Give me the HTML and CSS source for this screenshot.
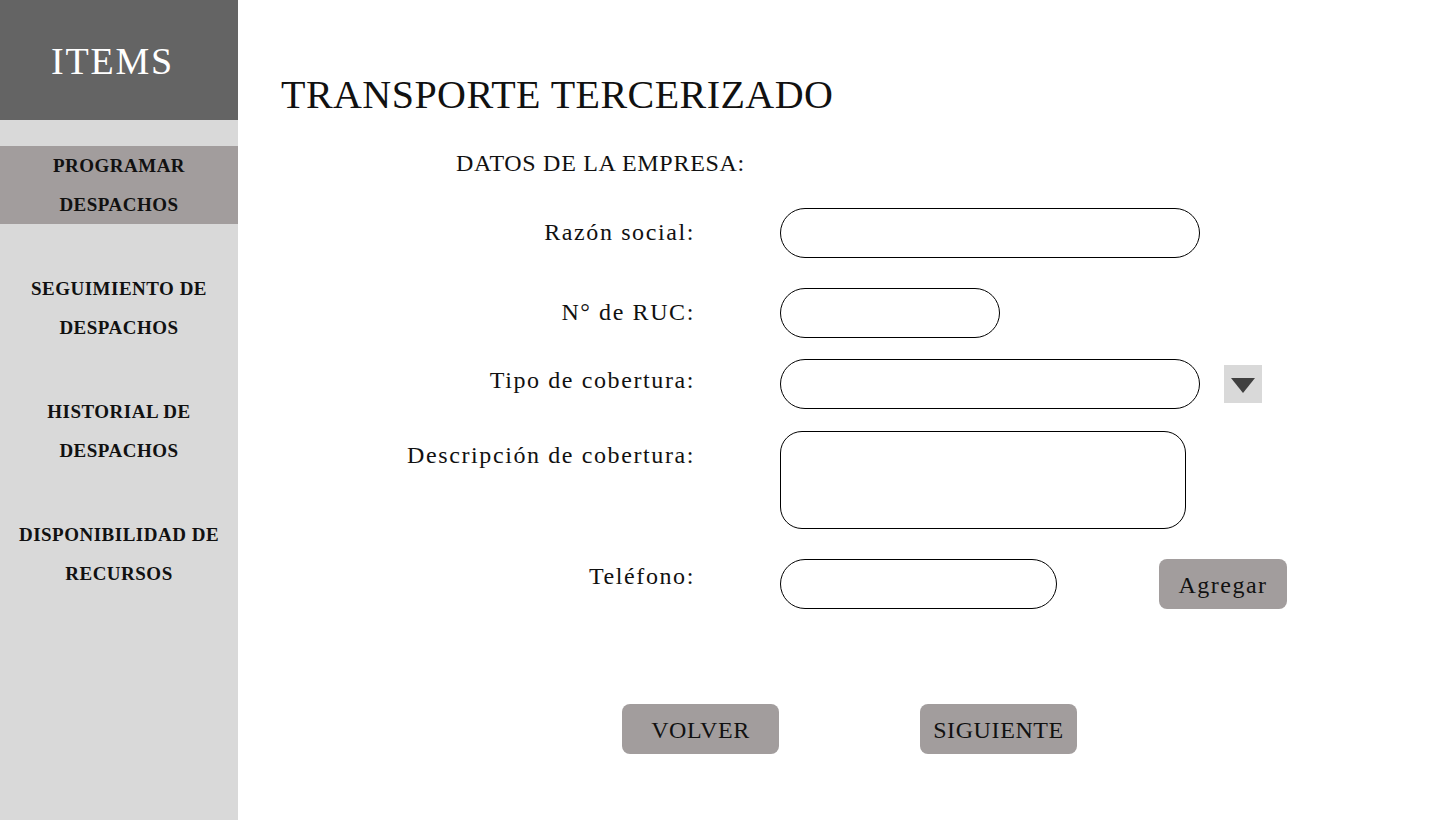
FILE: index.html
```html
<!DOCTYPE html>
<html lang="es">
<head>
<meta charset="utf-8">
<title>Transporte tercerizado</title>
<link rel="stylesheet" href="styles.css">
</head>
<body>
<div class="app">
  <aside class="sidebar">
    <div class="sidebar-head">ITEMS</div>
    <nav class="nav">
      <div class="nav-item active">PROGRAMAR<br>DESPACHOS</div>
      <div class="nav-item">SEGUIMIENTO DE<br>DESPACHOS</div>
      <div class="nav-item">HISTORIAL DE<br>DESPACHOS</div>
      <div class="nav-item">DISPONIBILIDAD DE<br>RECURSOS</div>
    </nav>
  </aside>
  <main class="main">
    <h1 class="title">TRANSPORTE TERCERIZADO</h1>
    <div class="section">DATOS DE LA EMPRESA:</div>
    <form class="form">
      <div class="field">
        <label class="label">Razón social:</label>
        <div class="control"><input class="input w-lg" type="text"></div>
      </div>
      <div class="field gap-30">
        <label class="label">N° de RUC:</label>
        <div class="control"><input class="input w-sm" type="text"></div>
      </div>
      <div class="field gap-21">
        <label class="label up-3">Tipo de cobertura:</label>
        <div class="control">
          <input class="input w-lg" type="text">
          <span class="drop">
            <svg width="24" height="15" viewBox="0 0 24 15"><polygon points="0,0 24,0 12,15" fill="#404040"/></svg>
          </span>
        </div>
      </div>
      <div class="field gap-22">
        <label class="label">Descripción de cobertura:</label>
        <div class="control"><textarea class="textarea"></textarea></div>
      </div>
      <div class="field gap-30">
        <label class="label up-7">Teléfono:</label>
        <div class="control">
          <input class="input w-md" type="text">
          <button type="button" class="btn btn-add">Agregar</button>
        </div>
      </div>
    </form>
    <div class="actions">
      <button type="button" class="btn btn-nav">VOLVER</button>
      <button type="button" class="btn btn-nav">SIGUIENTE</button>
    </div>
  </main>
</div>
</body>
</html>
```
FILE: styles.css
```css
* { box-sizing: border-box; }
html, body { margin: 0; padding: 0; background: #fff; }
body {
  font-family: "Liberation Serif", "Times New Roman", serif;
  color: #111;
}
.app {
  display: flex;
  width: 1440px;
  height: 820px;
}
.sidebar {
  width: 238px;
  flex: none;
  background: #d9d9d9;
  display: flex;
  flex-direction: column;
}
.sidebar-head {
  height: 120px;
  background: #646464;
  color: #fff;
  font-size: 38px;
  letter-spacing: 1.8px;
  display: flex;
  align-items: center;
  justify-content: center;
  padding-right: 13px;
  padding-top: 1px;
}
.nav {
  margin-top: 26px;
  display: flex;
  flex-direction: column;
  gap: 45px;
}
.nav-item {
  font-weight: 700;
  font-size: 19px;
  line-height: 39px;
  letter-spacing: 0.5px;
  text-align: center;
  color: #111;
}
.nav-item.active {
  background: #a29d9d;
}
.main {
  flex: 1;
  padding: 72px 0 0 43px;
}
.title {
  margin: 0;
  font-weight: 400;
  font-size: 40px;
  line-height: 46px;
  letter-spacing: 0.45px;
}
.section {
  margin: 30px 0 0 175px;
  font-size: 24px;
  line-height: 30px;
  letter-spacing: 0.7px;
}
.form {
  margin-top: 30px;
  display: flex;
  flex-direction: column;
}
.field {
  display: grid;
  grid-template-columns: 413px auto;
  column-gap: 86px;
  align-items: start;
}
.gap-30 { margin-top: 30px; }
.gap-21 { margin-top: 21px; }
.gap-22 { margin-top: 22px; }
.label {
  text-align: right;
  font-size: 24px;
  letter-spacing: 1.6px;
  line-height: 48px;
  margin-right: -1px;
}
.up-3 { margin-top: -3px; }
.up-7 { margin-top: -7px; }
.control {
  display: flex;
  align-items: center;
}
.input {
  height: 50px;
  border: 1px solid #000;
  border-radius: 25px;
  background: #fff;
  font: inherit;
  padding: 0 20px;
  outline: none;
}
.w-lg { width: 420px; }
.w-sm { width: 220px; }
.w-md { width: 277px; }
.textarea {
  width: 406px;
  height: 98px;
  border: 1px solid #000;
  border-radius: 22px;
  resize: none;
  font: inherit;
  padding: 12px 20px;
  outline: none;
  display: block;
}
.drop {
  width: 38px;
  height: 38px;
  margin-left: 24px;
  background: #d9d9d9;
  display: flex;
  align-items: center;
  justify-content: center;
  padding-top: 3px;
}
.drop svg { display: block; }
.btn {
  border: none;
  background: #a29d9d;
  border-radius: 8px;
  font-family: "Liberation Serif", "Times New Roman", serif;
  color: #111;
  cursor: pointer;
  padding: 0;
}
.btn-add {
  width: 128px;
  height: 50px;
  margin-left: 102px;
  font-size: 24px;
  letter-spacing: 1.5px;
  padding-top: 3px;
}
.actions {
  margin-top: 95px;
  padding-left: 341px;
  display: flex;
  gap: 141px;
}
.btn-nav {
  width: 157px;
  height: 50px;
  font-size: 24px;
  letter-spacing: 0.6px;
  padding-top: 2px;
}
```
